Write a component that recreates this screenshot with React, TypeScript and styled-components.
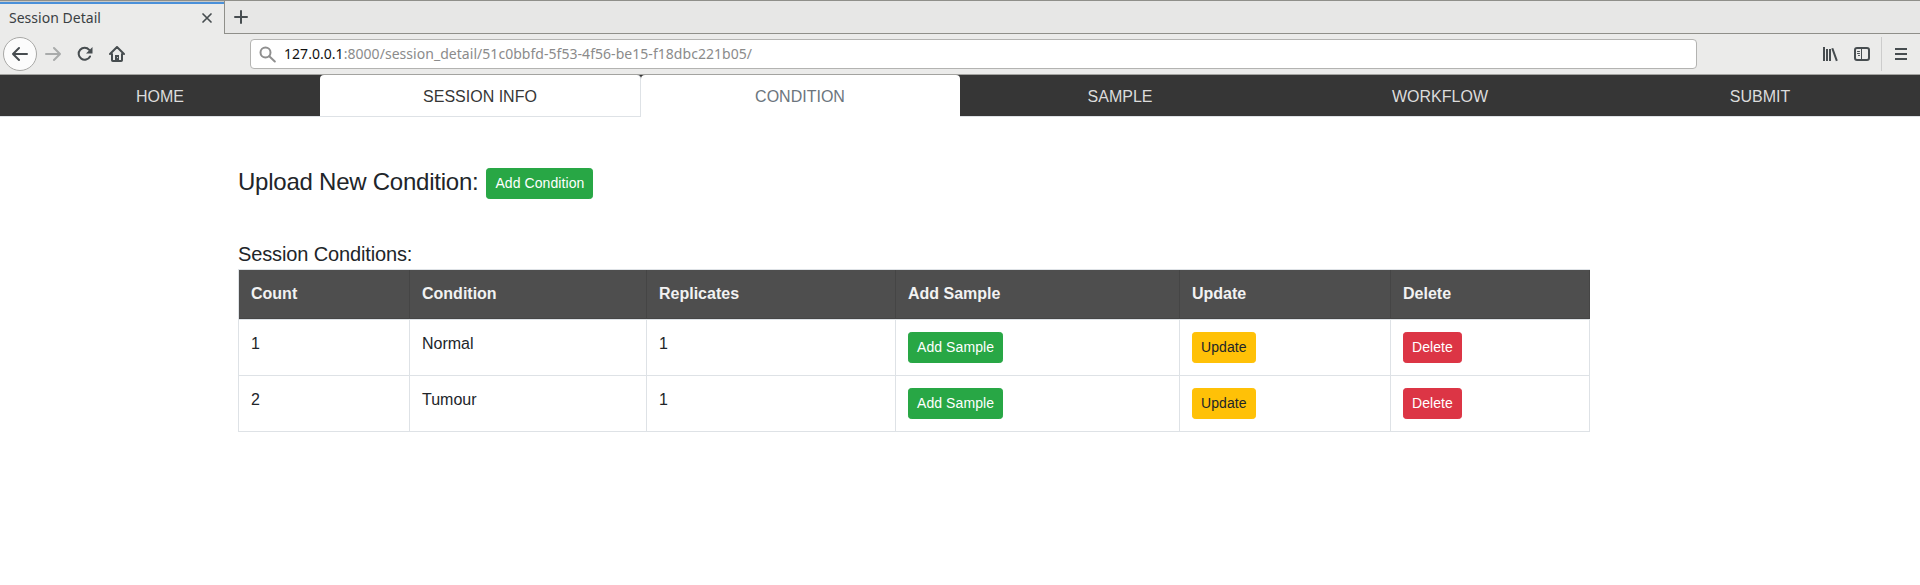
import React from 'react';
import styled, { createGlobalStyle } from 'styled-components';

const GlobalStyle = createGlobalStyle`
  *, *::before, *::after { box-sizing: border-box; }
  body {
    margin: 0;
    background: #fff;
    color: #212529;
    font: 16px/1.5 "Liberation Sans", Arial, sans-serif;
  }
`;

const Page = styled.div`
  min-height: 585px;
  overflow: hidden;
`;

const TabStrip = styled.div`
  display: flex;
  height: 34px;
  border-top: 1px solid #8f8f8a;
  background: #e7e7e6;
`;

const BrowserTab = styled.div`
  display: flex;
  align-items: center;
  justify-content: space-between;
  width: 225px;
  padding: 3px 11px 2px 9px;
  border-right: 1px solid #8f8f8a;
  background: linear-gradient(#c9c9c6 1px, #4a90d9 1px, #4a90d9 3px, #ebebea 3px);
  color: #3a4043;
  font: 14px/20px "Noto Sans", "Open Sans", sans-serif;
`;

const TabTitle = styled.span`
  letter-spacing: 0.02px;
`;

const StripRest = styled.div`
  flex: 1;
  display: flex;
  align-items: center;
  padding-left: 8px;
  border-bottom: 1px solid #8f8f8a;
`;

const Toolbar = styled.div`
  display: flex;
  align-items: center;
  height: 41px;
  padding: 0 12px 0 3px;
  border-bottom: 1px solid #a3a3a0;
  background: #ebebea;
  color: #474d50;
`;

const BackButton = styled.button`
  display: grid;
  place-items: center;
  width: 34px;
  height: 34px;
  padding: 0;
  border: 1px solid #a8a8a6;
  border-radius: 50%;
  background: #fcfcfc;
  color: inherit;
`;

const ToolIcons = styled.div`
  display: flex;
  gap: 16px;
  margin-left: 8px;
`;

const AddressBar = styled.div`
  display: flex;
  align-items: center;
  width: 1447px;
  height: 30px;
  margin-left: 125px;
  padding-left: 8px;
  border: 1px solid #b3b3b1;
  border-radius: 4px;
  background: #fff;
  color: #8b8b8b;
  font: 14px/20px "Noto Sans", "Open Sans", sans-serif;
`;

const Url = styled.span`
  margin-left: 8px;
  letter-spacing: 0.04px;
`;

const Host = styled.span`
  color: #111;
`;

const RightTools = styled.div`
  display: flex;
  align-items: center;
  gap: 16px;
  margin-left: auto;
`;

const MenuSlot = styled.div`
  display: flex;
  align-items: center;
  height: 34px;
  margin-left: -5px;
  padding-left: 12px;
  border-left: 1px solid #ccc;
`;

const Icon = styled.svg<{ $tone?: string }>`
  display: block;
  flex: none;
  fill: none;
  stroke: ${(p) => p.$tone ?? '#474d50'};
  stroke-width: 2;
  stroke-linecap: round;
  stroke-linejoin: round;
`;

const Nav = styled.nav`
  display: flex;
  height: 42px;
  border-bottom: 1px solid #dee2e6;
  background: #363636;
`;

type TabState = 'plain' | 'current' | 'muted';

const NavTab = styled.a<{ $state: TabState }>`
  flex: none;
  width: ${(p) => ({ plain: 320, current: 321, muted: 319 })[p.$state]}px;
  height: ${(p) => (p.$state === 'muted' ? 42 : 41)}px;
  padding-top: 10px;
  padding-right: ${(p) => (p.$state === 'muted' ? 1 : 0)}px;
  border-right: ${(p) => (p.$state === 'current' ? '1px solid #dee2e6' : '0')};
  border-radius: ${(p) => (p.$state === 'plain' ? '0' : '4px 4px 0 0')};
  background: ${(p) => (p.$state === 'plain' ? 'transparent' : '#fff')};
  color: ${(p) => ({ plain: '#dcdcdc', current: '#363636', muted: '#6c757d' })[p.$state]};
  text-align: center;
`;

const Content = styled.main`
  width: 1352px;
  margin-left: 238px;
  padding-top: 51px;
`;

const UploadRow = styled.div`
  display: flex;
  align-items: flex-start;
  gap: 8px;
  height: 74px;
`;

const Title = styled.h4`
  margin: 0;
  font-size: 24px;
  font-weight: 400;
  letter-spacing: -0.24px;
  line-height: 27px;
`;

const Subtitle = styled.h5`
  margin: 0 0 3px;
  font-size: 20px;
  font-weight: 400;
  letter-spacing: -0.13px;
  line-height: 24px;
`;

type Kind = 'add' | 'update' | 'remove';
const fills: Record<Kind, string> = { add: '#28a745', update: '#ffc107', remove: '#dc3545' };

const Button = styled.button<{ $kind: Kind }>`
  display: block;
  height: 31px;
  padding: 4px 8px;
  border: 1px solid ${(p) => fills[p.$kind]};
  border-radius: 3.2px;
  background: ${(p) => fills[p.$kind]};
  color: ${(p) => (p.$kind === 'update' ? '#212529' : '#fff')};
  font: 14px/21px "Liberation Sans", Arial, sans-serif;
  letter-spacing: 0.08px;
  white-space: nowrap;
`;

const Table = styled.table`
  width: 1352px;
  table-layout: fixed;
  border-collapse: separate;
  border-spacing: 0;
  border: solid #dee2e6;
  border-width: 1px 0 0 1px;
`;

const HeadCell = styled.th<{ $width: number }>`
  width: ${(p) => p.$width}px;
  height: 49px;
  padding: 12px;
  border: solid #454545;
  border-width: 0 1px 1px 0;
  background: #4e4e4e;
  color: #f2f2f2;
  line-height: 24px;
  text-align: left;
`;

const Body = styled.tbody`
  tr:first-child td { border-top: 1px solid #dee2e6; }
`;

const Cell = styled.td`
  padding: 12px;
  border: solid #dee2e6;
  border-width: 0 1px 1px 0;
  line-height: 24px;
  vertical-align: top;
`;

const navItems: { label: string; state: TabState }[] = [
  { label: 'HOME', state: 'plain' },
  { label: 'SESSION INFO', state: 'current' },
  { label: 'CONDITION', state: 'muted' },
  { label: 'SAMPLE', state: 'plain' },
  { label: 'WORKFLOW', state: 'plain' },
  { label: 'SUBMIT', state: 'plain' },
];

const columns = [
  { label: 'Count', width: 171 },
  { label: 'Condition', width: 237 },
  { label: 'Replicates', width: 249 },
  { label: 'Add Sample', width: 284 },
  { label: 'Update', width: 211 },
  { label: 'Delete', width: 199 },
];

const conditions = [
  { count: 1, name: 'Normal', replicates: 1 },
  { count: 2, name: 'Tumour', replicates: 1 },
];

export default function App() {
  return (
    <Page>
      <GlobalStyle />
      <TabStrip>
        <BrowserTab>
          <TabTitle>Session Detail</TabTitle>
          <Icon width="12" height="12" viewBox="0 0 12 12"><path d="M2 2l8 8M10 2l-8 8" strokeWidth="1.7" /></Icon>
        </BrowserTab>
        <StripRest>
          <Icon width="16" height="16" viewBox="0 0 16 16"><path d="M8 2v12M2 8h12" /></Icon>
        </StripRest>
      </TabStrip>
      <Toolbar>
        <BackButton aria-label="Back">
          <Icon width="16" height="16" viewBox="0 0 16 16"><path d="M15 8H1M7 2L1 8l6 6" /></Icon>
        </BackButton>
        <ToolIcons>
          <Icon $tone="#a9abab" width="16" height="16" viewBox="0 0 16 16"><path d="M1 8h14M9 2l6 6-6 6" /></Icon>
          <Icon width="16" height="16" viewBox="0 0 16 16">
            <path d="M13 10.5A6 6 0 1 1 12.2 3.8" />
            <path d="M15.5 1v6.5H9z" fill="#474d50" stroke="none" />
          </Icon>
          <Icon width="16" height="16" viewBox="0 0 16 16">
            <path d="M1 8l7-7 7 7M3 8v6.2q0 .8.8.8h8.4q.8 0 .8-.8V8" />
            <path d="M6 15V9h4v6z" fill="#474d50" stroke="none" />
            <path d="M8.5 11.6v.1" stroke="#ebebea" strokeWidth="1" />
          </Icon>
        </ToolIcons>
        <AddressBar>
          <Icon $tone="#8f8f8f" width="17" height="17" viewBox="0 0 17 17"><circle cx="6.5" cy="6.5" r="5" /><path d="M10.3 10.3l5.5 5.2" /></Icon>
          <Url><Host>127.0.0.1</Host>:8000/session_detail/51c0bbfd-5f53-4f56-be15-f18dbc221b05/</Url>
        </AddressBar>
        <RightTools>
          <Icon width="16" height="16" viewBox="0 0 16 16">
            <path d="M2 2v12M5 4v10M8 4v10M10.6 3.2L14.5 14" strokeLinecap="square" />
          </Icon>
          <Icon width="16" height="16" viewBox="0 0 16 16">
            <rect x="1" y="2" width="14" height="12" rx="2" />
            <path d="M7.5 3v10M3.5 5.5h2M3.5 7.5h2M4.5 9.5h1" strokeWidth="1" />
          </Icon>
          <MenuSlot>
            <Icon width="14" height="16" viewBox="0 0 14 16"><path d="M2 3h10M2 8h10M2 13h10" strokeLinecap="square" /></Icon>
          </MenuSlot>
        </RightTools>
      </Toolbar>
      <Nav>
        {navItems.map((item) => (
          <NavTab key={item.label} $state={item.state}>{item.label}</NavTab>
        ))}
      </Nav>
      <Content>
        <UploadRow>
          <Title>Upload New Condition:</Title>
          <Button $kind="add">Add Condition</Button>
        </UploadRow>
        <Subtitle>Session Conditions:</Subtitle>
        <Table>
          <thead>
            <tr>
              {columns.map((c) => <HeadCell key={c.label} $width={c.width}>{c.label}</HeadCell>)}
            </tr>
          </thead>
          <Body>
            {conditions.map((row) => (
              <tr key={row.count}>
                <Cell>{row.count}</Cell>
                <Cell>{row.name}</Cell>
                <Cell>{row.replicates}</Cell>
                <Cell><Button $kind="add">Add Sample</Button></Cell>
                <Cell><Button $kind="update">Update</Button></Cell>
                <Cell><Button $kind="remove">Delete</Button></Cell>
              </tr>
            ))}
          </Body>
        </Table>
      </Content>
    </Page>
  );
}
